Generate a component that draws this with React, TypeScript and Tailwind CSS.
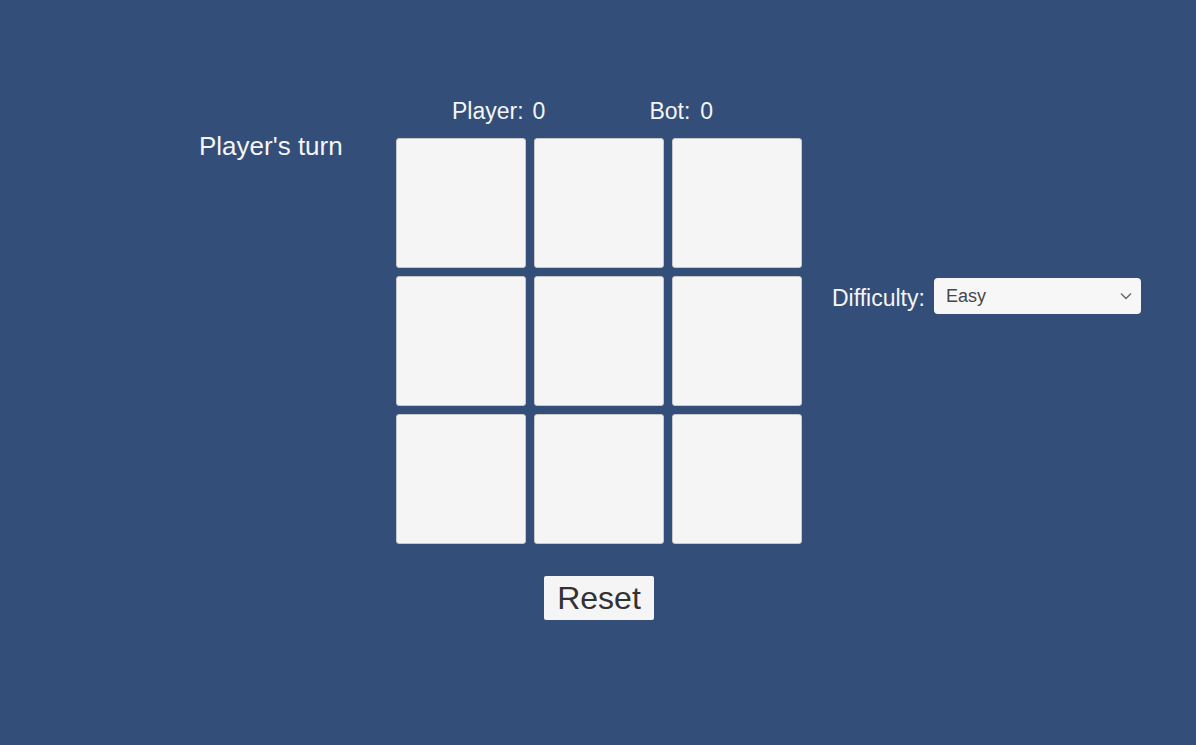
import { useState } from "react";

export default function App() {
  const [difficulty, setDifficulty] = useState("Easy");
  const cells = Array.from({ length: 9 }, (_, i) => i);

  return (
    <div
      className="flex h-[745px] w-full items-start bg-[#334e78] pl-[199px] pt-[97px] text-[#f5f5f5]"
      style={{ fontFamily: '"Liberation Sans", Arial, sans-serif' }}
    >
      {/* Turn */}
      <div className="mt-[34px] w-[197px] text-[26px] leading-[30px]">Player's turn</div>

      {/* Board */}
      <div className="flex w-[406px] flex-col">
        <div className="flex h-[28px] items-center text-[23px] leading-[28px]">
          <span className="ml-[56px]">Player:</span>
          <span className="ml-[9px]">0</span>
          <span className="ml-[104px]">Bot:</span>
          <span className="ml-[10px]">0</span>
        </div>
        <div className="mt-[13px] grid grid-cols-3 gap-[8px]">
          {cells.map((c) => (
            <button
              key={c}
              className="h-[130px] w-[130px] rounded-[3px] border border-[#c8c8c8] bg-[#f5f5f5]"
            />
          ))}
        </div>
        <div className="mt-[32px] flex justify-center">
          <button className="h-[44px] w-[110px] rounded-[2px] bg-[#f5f5f5] text-[32px] leading-[44px] text-[#323232]">
            Reset
          </button>
        </div>
      </div>

      {/* Difficulty */}
      <div className="ml-[30px] mt-[181px] flex items-center">
        <span className="mt-[3px] text-[23px] leading-[28px]">Difficulty:</span>
        <div className="relative ml-[9px] h-[36px] w-[207px] rounded-[4px] bg-[#f7f7f7]">
          <select
            value={difficulty}
            onChange={(e) => setDifficulty(e.target.value)}
            className="h-full w-full appearance-none bg-transparent pl-[12px] text-[18px] text-[#474747] outline-none"
          >
            <option>Easy</option>
            <option>Medium</option>
            <option>Hard</option>
          </select>
          <svg
            className="pointer-events-none absolute right-[9px] top-[14px]"
            width="12"
            height="8"
            viewBox="0 0 12 8"
            fill="none"
          >
            <path d="M1 1.5 6 6.5 11 1.5" stroke="#666" strokeWidth="1.4" />
          </svg>
        </div>
      </div>
    </div>
  );
}
